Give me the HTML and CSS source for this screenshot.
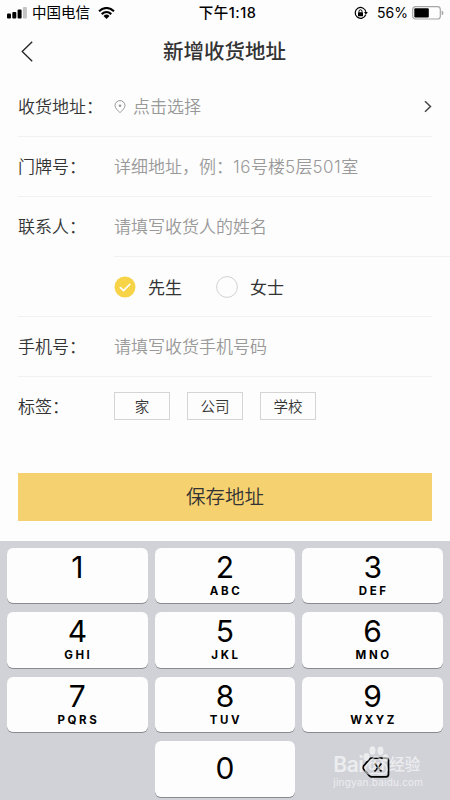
FILE: index.html
```html
<!DOCTYPE html>
<html lang="zh-CN">
<head>
    <meta charset="UTF-8">
    <meta name="viewport" content="width=device-width, initial-scale=1.0">
    <title>新增收货地址</title>
    <link rel="stylesheet" href="styles.css">
</head>
<body>
    <div class="status-bar">
        <div class="status-left">
            <svg class="signal" width="20" height="12" viewBox="0 0 20 12">
                <rect x="0" y="6.5" width="4" height="5" rx="1"/>
                <rect x="5.3" y="5" width="4" height="6.5" rx="1"/>
                <rect x="10.6" y="2.5" width="4" height="9" rx="1"/>
                <rect x="15.9" y="0" width="4" height="11.5" rx="1" fill="#c4c4c4"/>
            </svg>
            <span class="carrier">中国电信</span>
            <svg class="wifi" width="17" height="12" viewBox="0 0 17 12">
                <path d="M1 4.3Q8.500 -2.300 16 4.300M3.700 7.100Q8.500 2.900 13.300 7.100" fill="none" stroke="#000" stroke-width="2.100"/>
                <path d="M5.500 8.900Q8.500 6.300 11.500 8.900L8.500 11.900Z"/>
            </svg>
        </div>
        <div class="time">下午1:18</div>
        <div class="status-right">
            <svg class="lock" width="14" height="14" viewBox="0 0 14 14" fill="none" stroke="#000">
                <path d="M11.700 8.700A5.400 5.400 0 1 1 11.900 5.800" stroke-width="1.200"/>
                <path d="M10 6.100H13.800L11.900 8.700Z" fill="#000" stroke="none"/>
                <rect x="4" y="6.300" width="5" height="3.900" rx=".5" fill="#000" stroke="none"/>
                <path d="M5 6.500V5.300A1.500 1.500 0 0 1 8 5.300V6.500" stroke-width="1"/>
            </svg>
            <span class="percent">56%</span>
            <svg class="battery" width="32" height="14" viewBox="0 0 32 14">
                <rect x=".7" y=".7" width="27.600" height="12.300" rx="2.800" fill="none" stroke="#a6a6a6" stroke-width="1.200"/>
                <rect x="2.300" y="2.300" width="14.500" height="9.100" rx="1"/>
                <path d="M29.700 4.500Q31.500 5.200 31.500 6.900T29.700 9.300Z" fill="#a6a6a6"/>
            </svg>
        </div>
    </div>

    <div class="header">
        <svg class="back" width="12" height="21" viewBox="0 0 12 21" fill="none" stroke="#222" stroke-width="1.300">
            <path d="M11.200 .7L1.200 10.500L11.200 20.300"/>
        </svg>
        <h1>新增收货地址</h1>
    </div>

    <div class="form">
        <div class="row">
            <label>收货地址：</label>
            <svg class="pin" width="12" height="14" viewBox="0 0 12 14">
                <path d="M6 12.700C4.500 11 1 8.400 1 5.500A5 4.900 0 0 1 11 5.500C11 8.400 7.500 11 6 12.700Z" fill="none" stroke="#999" stroke-width="1"/>
                <circle cx="6" cy="5.700" r="1.300" fill="#999"/>
            </svg>
            <span class="hint">点击选择</span>
            <svg class="arrow" width="8" height="13" viewBox="0 0 8 13" fill="none" stroke="#444" stroke-width="1.500">
                <path d="M1 1.200L6.500 6.500L1 11.800"/>
            </svg>
        </div>
        <div class="row">
            <label>门牌号：</label>
            <span class="hint">详细地址，例：<span class="num">16</span>号楼<span class="num">5</span>层<span class="num">501</span>室</span>
        </div>
        <div class="row no-line">
            <label>联系人：</label>
            <span class="hint">请填写收货人的姓名</span>
        </div>
        <div class="row gender">
            <svg class="radio" width="22" height="22" viewBox="0 0 22 22">
                <circle cx="11" cy="11" r="10.500" fill="#f7d347"/>
                <path d="M5.900 11.100L9.500 14.600L16.200 8" fill="none" stroke="#fff" stroke-width="1.700"/>
            </svg>
            <span class="option">先生</span>
            <svg class="radio" width="22" height="22" viewBox="0 0 22 22">
                <circle cx="11" cy="11" r="10.400" fill="none" stroke="#d2d2d2"/>
            </svg>
            <span class="option">女士</span>
        </div>
        <div class="row">
            <label>手机号：</label>
            <span class="hint">请填写收货手机号码</span>
        </div>
        <div class="row no-line">
            <label>标签：</label>
            <div class="tags">
                <button class="tag">家</button>
                <button class="tag">公司</button>
                <button class="tag">学校</button>
            </div>
        </div>
        <button class="save">保存地址</button>
    </div>

    <div class="keyboard">
        <button class="key">1</button>
        <button class="key">2<span>ABC</span></button>
        <button class="key">3<span>DEF</span></button>

        <button class="key">4<span>GHI</span></button>
        <button class="key">5<span>JKL</span></button>
        <button class="key">6<span>MNO</span></button>

        <button class="key">7<span>PQRS</span></button>
        <button class="key">8<span>TUV</span></button>
        <button class="key">9<span>WXYZ</span></button>

        <div class="blank"></div>
        <button class="key zero">0</button>
        <div class="delete">
            <svg width="28" height="21" viewBox="0 0 28 21" fill="none" stroke="#000" stroke-width="1.700">
                <path d="M9.500 1.200H24Q26.500 1.200 26.500 3.700V17.300Q26.500 19.800 24 19.800H9.500Q8.500 19.800 7.500 18.800L1.500 12Q.5 10.500 1.500 9L7.500 2.200Q8.500 1.200 9.500 1.200Z"/>
                <path d="M12.500 6.500L19.500 14.500M19.500 6.500L12.500 14.500"/>
            </svg>
            <div class="watermark">
                <div class="brand">
                    <span class="bai">Bai</span>
                    <svg width="26" height="29" viewBox="0 0 26 29" fill="none" stroke="#fff" stroke-width="1.500">
                        <g fill="#fff" stroke="none">
                            <ellipse cx="3.500" cy="11" rx="3" ry="4"/>
                            <ellipse cx="9.500" cy="4.500" rx="3" ry="4.200"/>
                            <ellipse cx="17.500" cy="4.700" rx="3" ry="4.200"/>
                            <ellipse cx="22.500" cy="12" rx="3" ry="3.800"/>
                        </g>
                        <path d="M13 11C9 11 8.500 15 5 18C1 21.500 2 28 7 28C10 28 11 27.300 13 27.300S17 28 19 28C24.500 28 25.500 22 22 18.500C18.500 15 17 11 13 11Z"/>
                    </svg>
                    <span class="du">du</span>
                    <span class="jy">经验</span>
                </div>
                <div class="site">jingyan.baidu.com</div>
            </div>
        </div>
    </div>
</body>
</html>
```
FILE: styles.css
```css
* {
    box-sizing: border-box;
}

body {
    margin: 0;
    height: 800px;
    display: flex;
    flex-direction: column;
    overflow: hidden;
    font-family: Inter, "Noto Sans CJK SC", sans-serif;
    background-color: #fdfdfd;
    color: #333;
}

button {
    font-family: inherit;
    color: inherit;
    padding: 0;
}

svg {
    flex-shrink: 0;
}

.status-bar {
    display: grid;
    grid-template-columns: 1fr auto 1fr;
    align-items: center;
    height: 25px;
    padding: 0 6px 0 7px;
    font-size: 14.5px;
    color: #000;
}

.status-left,
.status-right {
    display: flex;
    align-items: center;
}

.status-right {
    justify-content: flex-end;
}

.carrier {
    margin: 0 8px 0 5px;
    line-height: 21px;
}

.time {
    margin-left: 4px;
    padding-bottom: 2px;
    font-weight: 500;
    font-size: 14.5px;
    letter-spacing: .5px;
}

.percent {
    margin: 0 4px 0 9px;
    font-size: 14px;
}

.header {
    display: flex;
    align-items: center;
    height: 52px;
    padding-left: 21px;
}

.header h1 {
    flex: 1;
    margin: 0 35px 3px 1px;
    text-align: center;
    font-size: 20.5px;
    font-weight: 500;
}

.form {
    flex: 1;
    padding: 0 18px;
}

.row {
    display: flex;
    align-items: center;
    height: 60px;
    border-bottom: 1px solid #f1f1f1;
    font-size: 17px;
}

.row label {
    width: 96px;
    padding-bottom: 2px;
    font-weight: 350;
    white-space: nowrap;
}

.no-line {
    border-color: transparent;
}

.hint {
    padding-bottom: 2px;
    color: #999;
    font-weight: 350;
}

.num {
    letter-spacing: .5px;
}

.pin {
    margin-right: 7px;
}

.arrow {
    margin-left: auto;
}

.gender {
    position: relative;
    padding-left: 96px;
}

/* divider that runs to the right edge of the screen */
.gender::before {
    content: "";
    position: absolute;
    top: -1px;
    left: 96px;
    right: -18px;
    height: 1px;
    background-color: #f1f1f1;
}

.option {
    margin: 0 34px 0 12px;
}

.tags {
    display: flex;
    gap: 17px;
    padding-bottom: 2px;
}

.tag {
    width: 56px;
    height: 28px;
    border: 1px solid #d4d4d4;
    background: none;
    font-size: 14.5px;
    font-weight: 350;
}

.save {
    display: block;
    width: 100%;
    height: 48px;
    margin-top: 36px;
    padding-bottom: 3px;
    border: none;
    background-color: #f6d170;
    font-size: 19.5px;
    font-weight: 350;
}

.keyboard {
    display: grid;
    grid-template-columns: repeat(3, 1fr);
    grid-auto-rows: 55.5px;
    gap: 9px 7px;
    height: 259px;
    padding: 6.8px 7px;
    background-color: #d1d2d8;
}

.key {
    display: flex;
    flex-direction: column;
    align-items: center;
    padding-top: 2px;
    border: none;
    border-radius: 6px;
    background-color: #fdfdfd;
    box-shadow: 0 1px 0 #898b90;
    color: #000;
    font-size: 30px;
    line-height: 35px;
}

.key span {
    margin-left: 2px;
    font-size: 11.5px;
    font-weight: 700;
    line-height: 13px;
    letter-spacing: 2.6px;
}

.zero {
    justify-content: center;
    padding: 0 0 1px;
}

.delete {
    position: relative;
    display: flex;
    align-items: center;
    justify-content: center;
    padding: 0 0 3px 7px;
}

/* site mark laid over the delete key */
.watermark {
    position: absolute;
    left: 31px;
    top: 5px;
    color: #fff;
    opacity: .6;
}

.brand {
    position: relative;
    display: flex;
    align-items: flex-end;
    height: 29px;
}

.bai {
    width: 30px;
    font-size: 21px;
    font-weight: 600;
    line-height: 21px;
    letter-spacing: -.5px;
}

.du {
    position: absolute;
    left: 35px;
    top: 11px;
    font-size: 13px;
    font-weight: 600;
}

.jy {
    font-size: 15.5px;
    font-weight: 500;
    line-height: 20px;
}

.site {
    font-size: 10px;
    line-height: 14px;
    letter-spacing: .2px;
}
```
